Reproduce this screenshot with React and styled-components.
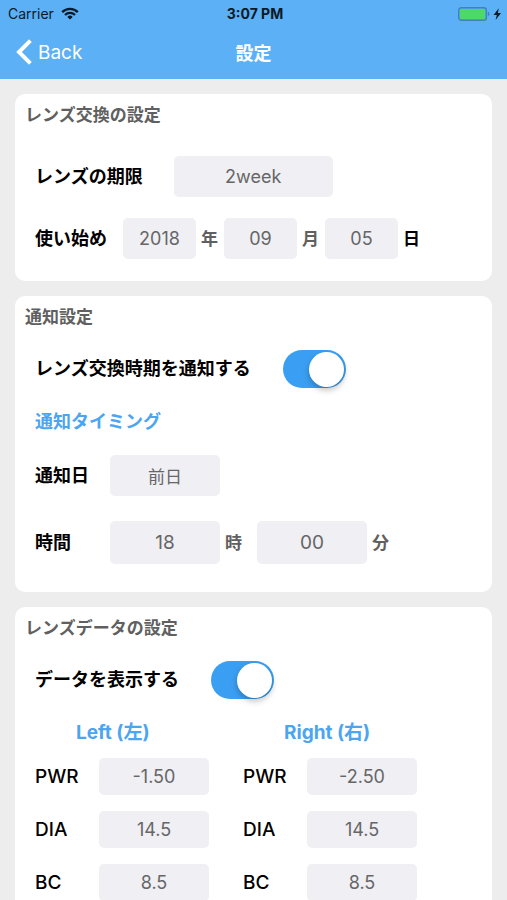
import React, { useState } from 'react';
import styled, { createGlobalStyle } from 'styled-components';

const units = ['year', 'month', 'day'];
const unitLabels = { year: '年', month: '月', day: '日' };

const eyes = [
    { id: 'left', title: 'Left (左)' },
    { id: 'right', title: 'Right (右)' },
];
const lensFields = ['PWR', 'DIA', 'BC'];

const App = () => {
    const [settings, setSettings] = useState({
        period: '2week',
        year: '2018',
        month: '09',
        day: '05',
        notify: true,
        notifyDay: '前日',
        hour: '18',
        minute: '00',
        showData: true,
    });
    const [lens, setLens] = useState({
        left: { PWR: '-1.50', DIA: '14.5', BC: '8.5' },
        right: { PWR: '-2.50', DIA: '14.5', BC: '8.5' },
    });

    // props shared by every text field that edits one setting
    const field = (name) => ({
        id: name,
        value: settings[name],
        onChange: (e) => setSettings({ ...settings, [name]: e.target.value }),
    });

    const toggle = (name) => ({
        id: name,
        type: 'checkbox',
        role: 'switch',
        checked: settings[name],
        onChange: (e) => setSettings({ ...settings, [name]: e.target.checked }),
    });

    const updateLens = (eye, name, value) => {
        setLens({ ...lens, [eye]: { ...lens[eye], [name]: value } });
    };

    return (
        <Screen>
            <GlobalStyle />
            <Header>
                <StatusBar>
                    <Carrier>
                        Carrier
                        <WifiIcon />
                    </Carrier>
                    <Clock>3:07 PM</Clock>
                    <Power>
                        <BatteryIcon />
                    </Power>
                </StatusBar>
                <NavBar>
                    <BackButton type="button">
                        <BackIcon />
                        Back
                    </BackButton>
                    <NavTitle>設定</NavTitle>
                </NavBar>
            </Header>

            <Content>
                <Card $bottom={22}>
                    <CardTitle>レンズ交換の設定</CardTitle>
                    <Row $space={20}>
                        <Label htmlFor="period">レンズの期限</Label>
                        <Field $width={159} $indent={31} {...field('period')} />
                    </Row>
                    <Row>
                        <Label htmlFor="year">使い始め</Label>
                        <FieldGroup>
                            {units.map((unit) => (
                                <React.Fragment key={unit}>
                                    <Field $width={73} {...field(unit)} />
                                    <Unit htmlFor={unit} $strong={unit === 'day'}>{unitLabels[unit]}</Unit>
                                </React.Fragment>
                            ))}
                        </FieldGroup>
                    </Row>
                </Card>

                <Card>
                    <CardTitle>通知設定</CardTitle>
                    <Row $space={12}>
                        <Label htmlFor="notify">レンズ交換時期を通知する</Label>
                        <Switch {...toggle('notify')} />
                    </Row>
                    <Row $space={22}>
                        <SubTitle>通知タイミング</SubTitle>
                    </Row>
                    <Row>
                        <Label htmlFor="notifyDay" $width={75}>通知日</Label>
                        <Field $width={110} $size={17} {...field('notifyDay')} />
                    </Row>
                    <Row $space={25}>
                        <Label htmlFor="hour" $width={75}>時間</Label>
                        <Field $width={110} $height={43} $size={19} {...field('hour')} />
                        <Unit htmlFor="hour" $wide>時</Unit>
                        <Field $width={110} $height={43} $size={19} {...field('minute')} />
                        <Unit htmlFor="minute">分</Unit>
                    </Row>
                </Card>

                <Card>
                    <CardTitle>レンズデータの設定</CardTitle>
                    <Row $space={12}>
                        <Label htmlFor="showData">データを表示する</Label>
                        <Switch {...toggle('showData')} />
                    </Row>
                    {settings.showData && (
                        <LensData>
                            {eyes.map((eye) => (
                                <Eye key={eye.id}>
                                    <EyeTitle>{eye.title}</EyeTitle>
                                    {lensFields.map((name) => (
                                        <EyeRow key={name}>
                                            <Label htmlFor={eye.id + name} $width={64} $latin>{name}</Label>
                                            <Field
                                                id={eye.id + name}
                                                $width={110}
                                                $height={37}
                                                value={lens[eye.id][name]}
                                                onChange={(e) => updateLens(eye.id, name, e.target.value)}
                                            />
                                        </EyeRow>
                                    ))}
                                </Eye>
                            ))}
                        </LensData>
                    )}
                </Card>
            </Content>
        </Screen>
    );
};

export default App;

const WifiIcon = () => (
    <svg width="18" height="13" viewBox="0 0 18 13" fill="none" stroke="#0b1a27" strokeWidth="2.3" aria-hidden="true">
        <path d="M1.2 5.1 A11 11 0 0 1 16.8 5.1" />
        <path d="M4 8 A7 7 0 0 1 14 8" />
        <path d="M9 12.6 L6.3 9.9 A3.9 3.9 0 0 1 11.7 9.9 Z" fill="#0b1a27" stroke="none" />
    </svg>
);

const BatteryIcon = () => (
    <svg width="44" height="14" viewBox="0 0 44 14" aria-hidden="true">
        <rect x="0.7" y="0.7" width="27.6" height="12.6" rx="2.6" fill="none" stroke="#3f82ba" strokeWidth="1.4" />
        <rect x="2" y="2" width="25" height="10" rx="1.2" fill="#4cd964" />
        <path d="M29.8 4.8 C32 5.4 32 8.6 29.8 9.2 Z" fill="#3f82ba" />
        <path d="M40.8 1.2 L35.6 8 H38.8 L37.6 13 L43 6 H39.8 Z" fill="#0b1a27" />
    </svg>
);

const BackIcon = () => (
    <svg width="16" height="26" viewBox="0 0 16 26" fill="none" stroke="white" strokeWidth="4" aria-hidden="true">
        <path d="M14.4 1.6 L3 13 L14.4 24.4" />
    </svg>
);

const GlobalStyle = createGlobalStyle`
    *{
        box-sizing: border-box;
    }

    body{
        margin: 0;
        background-color: #ededed;
        font-family: Inter, 'Noto Sans CJK JP', sans-serif;
    }

    h1, h2, h3{
        margin: 0;
    }
`

const Screen = styled.div`
    height: 100vh;
    display: flex;
    flex-direction: column;
`

const Header = styled.header`
    background-color: #5cb0f5;
`

const StatusBar = styled.div`
    display: grid;
    grid-template-columns: 1fr auto 1fr;
    align-items: center;
    height: 27px;
    padding: 0 5px 0 8px;
    font-size: 14px;
    color: #0b1a27;
`

const Carrier = styled.div`
    display: flex;
    align-items: center;
    gap: 7px;
`

const Clock = styled.div`
    font-weight: 700;
`

const Power = styled.div`
    display: flex;
    justify-content: flex-end;
`

const NavBar = styled.div`
    display: grid;
    grid-template-columns: 1fr auto 1fr;
    align-items: center;
    height: 52px;
    padding: 0 16px 2px;
    color: white;
`

const BackButton = styled.button`
    display: flex;
    align-items: center;
    gap: 6px;
    justify-self: start;
    padding: 0;
    border: none;
    background: none;
    color: white;
    font-family: inherit;
    font-size: 19px;
    cursor: pointer;
`

const NavTitle = styled.h1`
    font-size: 18px;
    font-weight: 700;
`

const Content = styled.main`
    flex: 1;
    min-height: 0;
    display: flex;
    flex-direction: column;
    gap: 15px;
    padding: 15px;
    overflow-y: auto;
    scrollbar-width: none;
`

const Card = styled.section`
    flex-shrink: 0;
    padding: 0 20px ${({ $bottom = 28 }) => $bottom}px;
    border-radius: 10px;
    background-color: white;
`

const CardTitle = styled.h2`
    margin-left: -10px;
    line-height: 42px;
    font-size: 17px;
    font-weight: 700;
    color: #606060;
`

const Row = styled.div`
    display: flex;
    align-items: center;
    margin-top: ${({ $space = 21 }) => $space}px;
`

const Label = styled.label`
    width: ${({ $width }) => ($width ? `${$width}px` : 'auto')};
    line-height: 24px;
    font-size: ${({ $latin }) => ($latin ? 19 : 18)}px;
    font-weight: ${({ $latin }) => ($latin ? 500 : 700)};
    color: black;
`

const SubTitle = styled.h3`
    line-height: 24px;
    font-size: 18px;
    font-weight: 700;
    color: #4ca5f0;
`

const FieldGroup = styled.div`
    display: flex;
    align-items: center;
    margin-left: 16px;
`

const Field = styled.input`
    width: ${({ $width }) => $width}px;
    height: ${({ $height = 41 }) => $height}px;
    margin-left: ${({ $indent = 0 }) => $indent}px;
    padding: 0;
    border: none;
    border-radius: 5px;
    background-color: #efeff4;
    color: #666;
    font-family: inherit;
    font-size: ${({ $size = 18 }) => $size}px;
    line-height: 24px;
    text-align: center;
`

const Unit = styled.label`
    width: ${({ $wide }) => ($wide ? 37 : 28)}px;
    padding-left: 5px;
    line-height: 24px;
    font-size: 17px;
    font-weight: 700;
    color: ${({ $strong }) => ($strong ? 'black' : '#606060')};
`

const Switch = styled.input`
    appearance: none;
    display: flex;
    align-items: center;
    width: 63px;
    height: 38px;
    margin: 0 0 0 32px;
    padding: 0 2px;
    border-radius: 19px;
    background-color: #d8d8dc;
    cursor: pointer;

    &::before{
        content: '';
        width: 35px;
        height: 35px;
        border-radius: 50%;
        background-color: white;
        box-shadow: 0 3px 6px 0 rgb(0 0 0 / 25%);
    }

    &:checked{
        justify-content: flex-end;
        background-color: #3a9ff2;
    }
`

const LensData = styled.div`
    display: flex;
    gap: 34px;
    margin-top: 22px;
`

const Eye = styled.div`
    display: flex;
    flex-direction: column;
    gap: 16px;
`

const EyeTitle = styled.h3`
    margin-bottom: -3px;
    padding-left: 41px;
    line-height: 24px;
    font-size: 19px;
    font-weight: 700;
    color: #4ca5f0;
`

const EyeRow = styled.div`
    display: flex;
    align-items: center;
`
